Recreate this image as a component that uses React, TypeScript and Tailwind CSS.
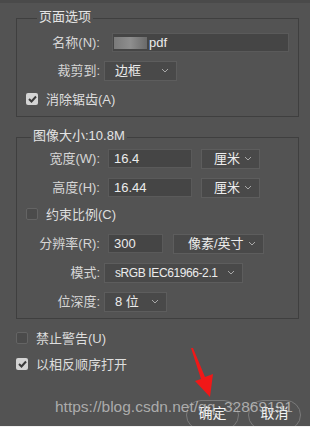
import React from "react"

const font = { fontFamily: '"Liberation Sans", "Noto Sans CJK SC", sans-serif' }

function Chevron() {
  return (
    <svg width="8" height="5" viewBox="0 0 8 5" className="shrink-0">
      <path d="M1 1 L4 4 L7 1" fill="none" stroke="#a8a8a8" strokeWidth="1" />
    </svg>
  )
}

function Select({ value, w, pl = "pl-[10px]", size = "text-[13px]" }: { value: string; w: string; pl?: string; size?: string }) {
  return (
    <div
      className={`${w} h-[20px] flex items-center justify-between ${pl} pr-[7px] bg-[#494949] border border-[#5d5d5d] text-[#ececec] ${size} leading-none`}
    >
      <span className="whitespace-nowrap">{value}</span>
      <Chevron />
    </div>
  )
}

function Input({ value, w }: { value: string; w: string }) {
  return (
    <div className={`${w} h-[19px] flex items-center pl-[5px] bg-[#454545] border border-[#5a5a5a] text-[#ececec] text-[13px] leading-none`}>
      {value}
    </div>
  )
}

function Label({ text }: { text: string }) {
  return <div className="w-[83px] text-right text-[13px] leading-none text-[#d6d6d6] whitespace-nowrap">{text}</div>
}

function Check({ checked }: { checked: boolean }) {
  return checked ? (
    <div className="w-[12px] h-[12px] rounded-[2px] bg-[#d4d4d4] flex items-center justify-center">
      <svg width="9" height="8" viewBox="0 0 9 8">
        <path d="M1 4 L3.5 6.5 L8 1.5" fill="none" stroke="#3a3a3a" strokeWidth="2" />
      </svg>
    </div>
  ) : (
    <div className="w-[12px] h-[12px] rounded-[2px] bg-[#4b4b4b] border border-[#646464]" />
  )
}

function CheckRow({ checked, text, indent }: { checked: boolean; text: string; indent: string }) {
  return (
    <div className={`h-[12px] flex items-center ${indent}`}>
      <Check checked={checked} />
      <span className="ml-[8px] text-[13px] leading-none text-[#dedede] whitespace-nowrap">{text}</span>
    </div>
  )
}

export default function App() {
  return (
    <div
      className="relative w-[310px] h-[427px] overflow-hidden bg-[#535353] border-t-[3px] border-t-[#4a4a4a] border-b border-b-[#f2f2f2]"
      style={font}
    >
      <div className="pl-[16px] pt-[15px]">
        {/* 页面选项 */}
        <div className="relative w-[283px] h-[99px] border border-[#3f3f3f]">
          <span className="absolute -top-[9px] left-[20px] px-[2px] bg-[#535353] text-[13px] leading-none text-[#e4e4e4]">
            页面选项
          </span>
          <div className="mt-[14px] h-[19px] flex items-center">
            <Label text="名称(N):" />
            <div className="ml-[12px] w-[177px] h-[19px] flex items-center bg-[#454545] border border-[#5a5a5a] text-[#ececec] text-[13px] leading-none">
              <div className="ml-[1px] w-[33px] h-[12px] bg-gradient-to-r from-[#7a7a7a] via-[#8e8e8e] to-[#6a6a6a]" />
              <span className="ml-[2px]">pdf</span>
            </div>
          </div>
          <div className="mt-[8px] h-[21px] flex items-center">
            <Label text="裁剪到:" />
            <div className="ml-[4px]">
              <Select value="边框" w="w-[73px]" />
            </div>
          </div>
          <div className="mt-[12px]">
            <CheckRow checked text="消除锯齿(A)" indent="pl-[9px]" />
          </div>
        </div>

        {/* 图像大小 */}
        <div className="relative mt-[20px] w-[283px] h-[182px] border border-[#3f3f3f]">
          <span className="absolute -top-[9px] left-[14px] px-[2px] bg-[#535353] text-[13px] leading-none text-[#e4e4e4]">
            图像大小:10.8M
          </span>
          <div className="mt-[11px] h-[19px] flex items-center">
            <Label text="宽度(W):" />
            <div className="ml-[8px]">
              <Input value="16.4" w="w-[84px]" />
            </div>
            <div className="ml-[9px]">
              <Select value="厘米" w="w-[59px]" pl="pl-[12px]" />
            </div>
          </div>
          <div className="mt-[10px] h-[19px] flex items-center">
            <Label text="高度(H):" />
            <div className="ml-[8px]">
              <Input value="16.44" w="w-[84px]" />
            </div>
            <div className="ml-[9px]">
              <Select value="厘米" w="w-[59px]" pl="pl-[12px]" />
            </div>
          </div>
          <div className="mt-[11px]">
            <CheckRow checked={false} text="约束比例(C)" indent="pl-[9px]" />
          </div>
          <div className="mt-[14px] h-[19px] flex items-center">
            <Label text="分辨率(R):" />
            <div className="ml-[8px]">
              <Input value="300" w="w-[55px]" />
            </div>
            <div className="ml-[10px]">
              <Select value="像素/英寸" w="w-[91px]" pl="pl-[14px]" />
            </div>
          </div>
          <div className="mt-[10px] h-[19px] flex items-center">
            <Label text="模式:" />
            <div className="ml-[4px]">
              <Select value="sRGB IEC61966-2.1" w="w-[139px]" size="text-[12px] tracking-[-0.4px]" />
            </div>
          </div>
          <div className="mt-[10px] h-[19px] flex items-center">
            <Label text="位深度:" />
            <div className="ml-[4px]">
              <Select value="8 位" w="w-[63px]" />
            </div>
          </div>
        </div>
      </div>

      <div className="mt-[13px]">
        <CheckRow checked={false} text="禁止警告(U)" indent="pl-[16px]" />
      </div>
      <div className="mt-[14px]">
        <CheckRow checked text="以相反顺序打开" indent="pl-[16px]" />
      </div>

      <div className="mt-[30px] pr-[9px] flex justify-end gap-[9px]">
        <div className="w-[53px] h-[30px] rounded-full border border-[#7a7a7a] flex justify-center pt-[5px] text-[14px] leading-none text-[#f4f4f4]">
          确定
        </div>
        <div className="w-[53px] h-[30px] rounded-full border border-[#7a7a7a] flex justify-center pt-[5px] text-[14px] leading-none text-[#f4f4f4]">
          取消
        </div>
      </div>

      {/* watermark */}
      <div
        className="absolute left-[55px] top-[396px] text-[15.5px] leading-none text-[#d4d4d4]/70 whitespace-nowrap"
        style={{ fontFamily: '"Liberation Sans", sans-serif' }}
      >
        https://blog.csdn.net/qq_32869191
      </div>

      {/* red arrow */}
      <svg className="absolute left-0 top-0" width="310" height="427" viewBox="0 0 310 427">
        <polygon points="191,345 193,345 205,374 213,371 210,394 195,378 201,376" fill="#f01818" />
      </svg>
    </div>
  )
}
